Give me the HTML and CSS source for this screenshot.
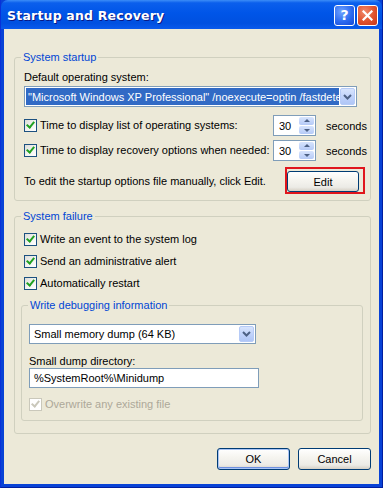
FILE: index.html
```html
<!DOCTYPE html>
<html lang="en">
<head>
    <meta charset="UTF-8">
    <title>Startup and Recovery</title>
    <link rel="stylesheet" href="styles.css">
</head>
<body>
    <div class="window">
        <div class="titlebar">
            <span class="title">Startup and Recovery</span>
            <div class="caption-btns">
                <span class="cap-btn help">?</span>
                <span class="cap-btn close">
                    <svg width="11" height="11" viewBox="0 0 11 11"><path d="M1.5 1.5 L9.5 9.5 M9.5 1.5 L1.5 9.5" stroke="#fff" stroke-width="2.2" stroke-linecap="square"/></svg>
                </span>
            </div>
        </div>

        <div class="client">
            <!-- System startup -->
            <fieldset class="group startup">
                <legend>System startup</legend>
                <div class="label">Default operating system:</div>
                <div class="combo wide">
                    <span class="combo-text selected">"Microsoft Windows XP Professional" /noexecute=optin /fastdete</span>
                    <span class="combo-arrow"><svg width="9" height="6" viewBox="0 0 9 6"><path d="M1 1 L4.5 4.5 L8 1" fill="none" stroke="#4D6185" stroke-width="2"/></svg></span>
                </div>
                <div class="spin-row first">
                    <label class="check long"><span class="box on"></span>Time to display list of operating systems:</label>
                    <div class="spinner"><span>30</span><span class="spin-btns"><i class="up"></i><i class="down"></i></span></div>
                    <span class="unit">seconds</span>
                </div>
                <div class="spin-row">
                    <label class="check long"><span class="box on"></span>Time to display recovery options when needed:</label>
                    <div class="spinner"><span>30</span><span class="spin-btns"><i class="up"></i><i class="down"></i></span></div>
                    <span class="unit">seconds</span>
                </div>
                <div class="edit-row">
                    <span>To edit the startup options file manually, click Edit.</span>
                    <span class="marked"><button class="xp-btn edit">Edit</button></span>
                </div>
            </fieldset>

            <!-- System failure -->
            <fieldset class="group failure">
                <legend>System failure</legend>
                <label class="check row"><span class="box on"></span>Write an event to the system log</label>
                <label class="check row"><span class="box on"></span>Send an administrative alert</label>
                <label class="check row"><span class="box on"></span>Automatically restart</label>

                <fieldset class="group debug">
                    <legend>Write debugging information</legend>
                    <div class="combo dump">
                        <span class="combo-text">Small memory dump (64 KB)</span>
                        <span class="combo-arrow"><svg width="9" height="6" viewBox="0 0 9 6"><path d="M1 1 L4.5 4.5 L8 1" fill="none" stroke="#4D6185" stroke-width="2"/></svg></span>
                    </div>
                    <div class="label dir-label">Small dump directory:</div>
                    <div class="textbox">%SystemRoot%\Minidump</div>
                    <label class="check disabled"><span class="box on"></span>Overwrite any existing file</label>
                </fieldset>
            </fieldset>

            <div class="dialog-btns">
                <button class="xp-btn default">OK</button>
                <button class="xp-btn">Cancel</button>
            </div>
        </div>
    </div>
</body>
</html>
```

FILE: styles.css
```css
body {
    margin: 0;
    background: #fff;
    font-family: 'Liberation Sans', Arial, sans-serif;
    font-size: 11px;
    color: #000;
}
.window {
    width: 383px;
    height: 488px;
    background: #0842D6;
    display: flex;
    flex-direction: column;
    box-sizing: border-box;
    border-left: 1px solid #0831D9;
    border-right: 1px solid #001EA0;
    border-bottom: 1px solid #001EA0;
}
.titlebar {
    height: 29px;
    flex: none;
    display: flex;
    align-items: center;
    justify-content: space-between;
    padding: 0 4px 0 6px;
    background: linear-gradient(180deg, #3C8DF7 0%, #0B5FEC 10%, #0055E8 45%, #0050E0 80%, #0A5AEC 100%);
    border-radius: 7px 7px 0 0;
}
.title {
    color: #fff;
    font-family: 'DejaVu Sans', sans-serif;
    font-weight: bold;
    font-size: 12.5px;
    letter-spacing: 0.2px;
    text-shadow: 1px 1px 0 #0A1883;
    margin-top: 1px;
}
.caption-btns {
    display: flex;
    gap: 2px;
    margin-top: 1px;
}
.cap-btn {
    width: 19px;
    height: 19px;
    border: 1px solid #fff;
    border-radius: 3px;
    display: flex;
    align-items: center;
    justify-content: center;
    color: #fff;
    font-family: 'DejaVu Sans', sans-serif;
    font-weight: bold;
    font-size: 14px;
}
.help {
    background: radial-gradient(circle at 35% 30%, #6FA3FF 0%, #2D6BF0 55%, #1347D6 100%);
}
.close {
    background: radial-gradient(circle at 35% 30%, #F08A6C 0%, #E0512C 55%, #C7361A 100%);
}
.client {
    flex: 1;
    background: #ECE9D8;
    margin: 0 3px 3px 3px;
    padding: 22px 8px 0 10px;
}
.group {
    margin: 0;
    padding: 7px 9px 6px 9px;
    border: 1px solid #D0D0BF;
    border-radius: 3px;
    min-width: 0;
}
.group legend {
    color: #0046D5;
    padding: 0 2px;
    margin-left: -3px;
    line-height: 13px;
}
.label {
    line-height: 13px;
}
.combo {
    height: 21px;
    box-sizing: border-box;
    border: 1px solid #7F9DB9;
    background: #fff;
    display: flex;
    align-items: center;
    padding: 1px;
}
.combo.wide {
    width: 333px;
    margin-top: 2px;
}
.combo-text {
    flex: 1;
    height: 100%;
    display: flex;
    align-items: center;
    padding-left: 2px;
    white-space: nowrap;
    overflow: hidden;
}
.combo-text.selected {
    background: #316AC5;
    color: #fff;
    margin-right: 1px;
}
.combo-arrow {
    width: 15px;
    height: 100%;
    box-sizing: border-box;
    border: 1px solid #B6CBF7;
    border-radius: 2px;
    background: linear-gradient(180deg, #D7E4FD 0%, #BDD0FA 60%, #AFC6F6 100%);
    display: flex;
    align-items: center;
    justify-content: center;
}
.check {
    display: flex;
    align-items: center;
    line-height: 13px;
    white-space: nowrap;
}
.box {
    width: 13px;
    height: 13px;
    box-sizing: border-box;
    border: 1px solid #1C5180;
    background: linear-gradient(135deg, #DCDCD7 0%, #F2F2EF 50%, #fff 100%);
    margin-right: 3px;
    flex: none;
    position: relative;
}
.box.on::after {
    content: '';
    position: absolute;
    left: 3px;
    top: 0px;
    width: 3px;
    height: 6px;
    border: solid #21A121;
    border-width: 0 2px 2px 0;
    transform: rotate(40deg);
}
.spin-row {
    display: flex;
    align-items: center;
    height: 21px;
    margin-top: 4px;
}
.spin-row.first {
    margin-top: 8px;
}
.check.long {
    width: 249px;
    flex: none;
}
.spinner {
    width: 43px;
    height: 21px;
    flex: none;
    box-sizing: border-box;
    border: 1px solid #7F9DB9;
    background: #fff;
    display: flex;
    align-items: center;
    justify-content: space-between;
    padding: 1px 1px 1px 5px;
}
.spin-btns {
    width: 15px;
    height: 100%;
    display: flex;
    flex-direction: column;
    gap: 1px;
}
.spin-btns i {
    flex: 1;
    border-radius: 2px;
    background: linear-gradient(180deg, #D7E4FD 0%, #B5CAF7 100%);
    position: relative;
}
.spin-btns i::after {
    content: '';
    position: absolute;
    left: 5px;
    width: 0;
    height: 0;
    border-left: 3px solid transparent;
    border-right: 3px solid transparent;
}
.spin-btns .up::after {
    top: 2px;
    border-bottom: 3px solid #4D6185;
}
.spin-btns .down::after {
    top: 3px;
    border-top: 3px solid #4D6185;
}
.unit {
    margin-left: 10px;
    white-space: nowrap;
}
.edit-row {
    display: flex;
    align-items: center;
    justify-content: space-between;
    margin-top: 6px;
}
.marked {
    display: block;
    border: 2px solid #E0161C;
    padding: 2px 4px 0 0;
    margin-right: -4px;
}
.xp-btn {
    display: block;
    width: 73px;
    height: 22px;
    padding: 0;
    border: 1px solid #003C74;
    border-radius: 3px;
    background: linear-gradient(180deg, #FFFFFF 0%, #F6F5F0 40%, #ECEBE6 80%, #D6D0C5 100%);
    font-family: 'Liberation Sans', Arial, sans-serif;
    font-size: 11px;
    color: #000;
}
.xp-btn.edit {
    width: 72px;
    height: 21px;
}
.xp-btn.default {
    box-shadow: inset 0 0 0 1px #A9C4F5, inset 0 -1px 0 1px #6E90E0;
}
.failure {
    margin-top: 9px;
    padding: 10px 9px 12px 9px;
}
.check.row {
    margin-bottom: 9px;
}
.debug {
    margin: 3px -2px 0 -3px;
    padding: 12px 9px 9px 7px;
}
.debug legend {
    margin-left: -1px;
}
.combo.dump {
    width: 227px;
    height: 20px;
}
.combo.dump .combo-text {
    padding-left: 3px;
}
.dir-label {
    margin-top: 11px;
}
.textbox {
    width: 230px;
    height: 20px;
    box-sizing: border-box;
    border: 1px solid #7F9DB9;
    background: #fff;
    padding-left: 4px;
    line-height: 18px;
}
.check.disabled {
    margin-top: 10px;
    color: #ACA899;
}
.check.disabled .box {
    border-color: #CAC8BB;
    background: #fff;
}
.check.disabled .box::after {
    border-color: #CAC8BB;
}
.dialog-btns {
    display: flex;
    justify-content: flex-end;
    gap: 8px;
    margin-top: 14px;
}
```
